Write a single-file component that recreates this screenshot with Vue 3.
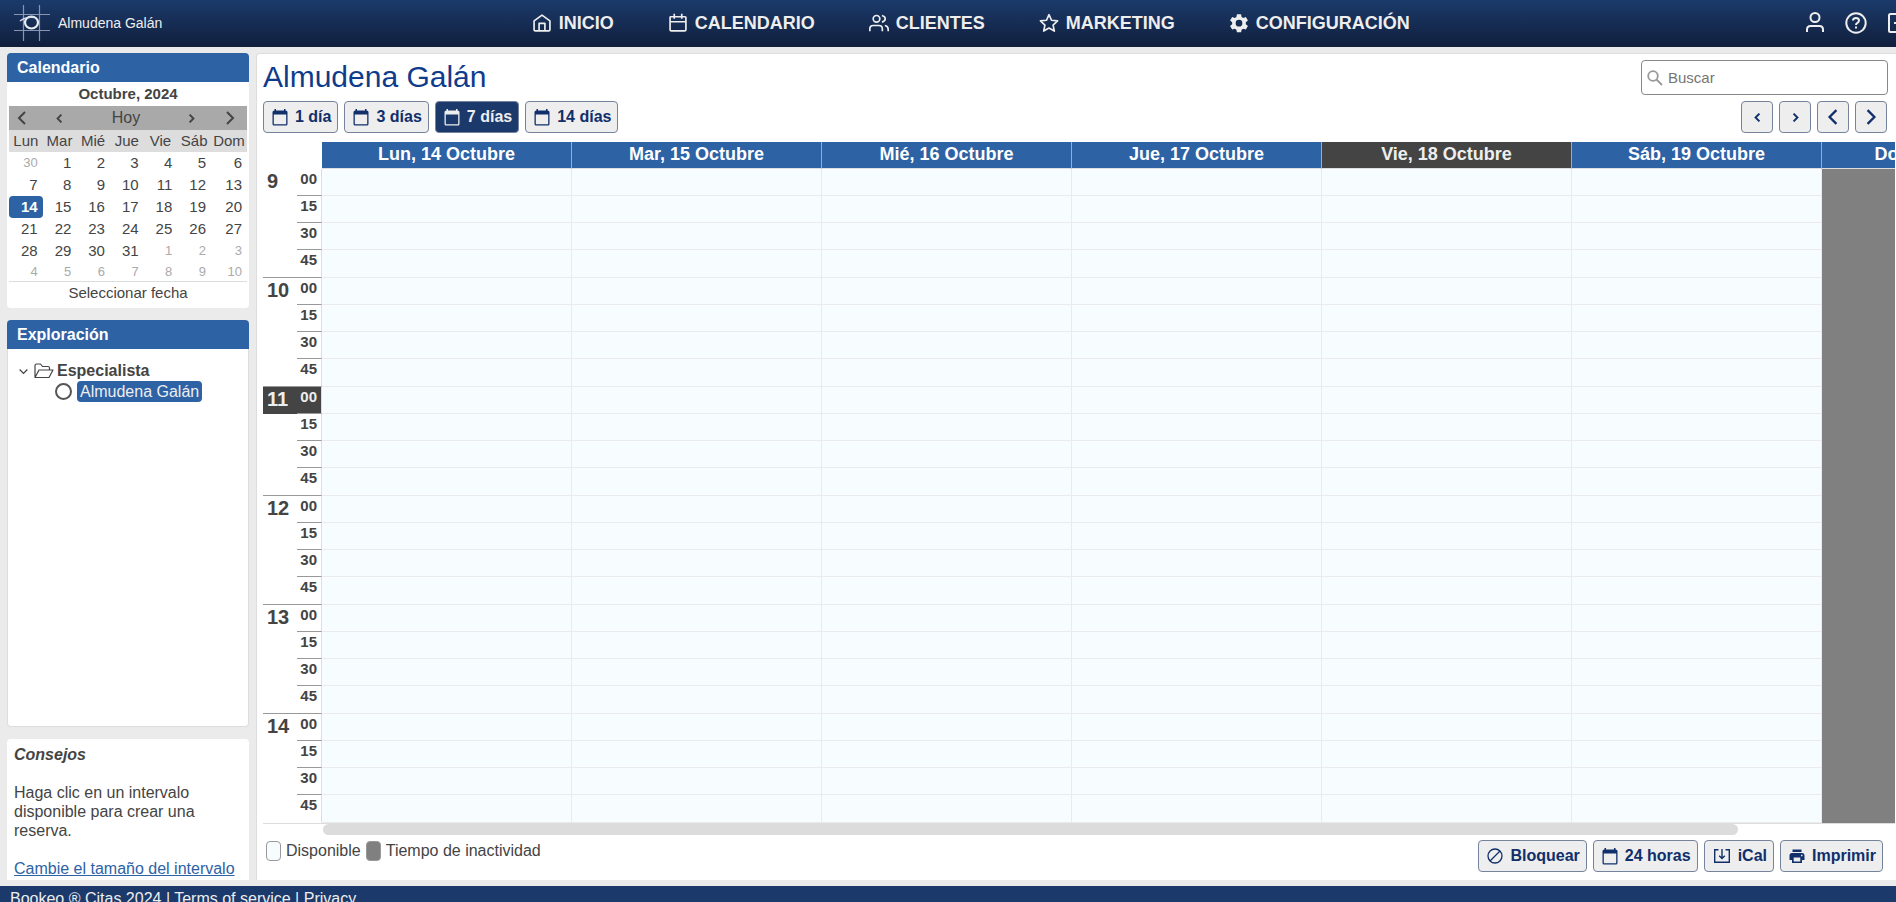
<template>
    <div class="page">
        <header>
            <a href="#" class="brand">
                <svg class="logo" viewBox="0 0 36 36" fill="none">
                    <path d="M9.500 0v36M25.500 0v36M0 9.500h36M0 25.500h36" stroke="#8795af" stroke-width="1.200" />
                    <ellipse cx="17.500" cy="17.500" rx="6.500" ry="6" stroke="#e8edf4" stroke-width="2.200" />
                    <path d="M6 16c4-3 9-4 14-3.500" stroke="#d5dce8" stroke-width="1.500" />
                </svg>
                <span>Almudena Galán</span>
            </a>
            <nav>
                <a v-for="link in links" :key="link.name" href="#">
                    <svg class="icon-menu" viewBox="0 0 24 24" fill="none" stroke="currentColor" stroke-width="2" stroke-linejoin="round">
                        <path v-for="d in link.paths" :key="d" :d="d" :fill="link.solid ? 'currentColor' : 'none'" :stroke="link.solid ? 'none' : 'currentColor'" fill-rule="evenodd" />
                    </svg>
                    <span>{{ link.name }}</span>
                </a>
            </nav>
            <div class="tools">
                <button v-for="tool in tools" :key="tool.name" :aria-label="tool.name">
                    <svg viewBox="0 0 24 24" fill="none" stroke="currentColor" stroke-width="2">
                        <path v-for="d in tool.paths" :key="d" :d="d" />
                    </svg>
                </button>
            </div>
        </header>

        <div class="body">
            <aside>
                <section class="box">
                    <h2>Calendario</h2>
                    <div class="month">Octubre, 2024</div>
                    <div class="picker">
                        <div class="month-nav">
                            <button aria-label="Mes anterior"><svg class="chevron-big" viewBox="0 0 14 14"><path d="M10 1L4 7l6 6" /></svg></button>
                            <button aria-label="Semana anterior"><svg class="chevron-small" viewBox="0 0 14 14"><path d="M10 1L4 7l6 6" /></svg></button>
                            <button>Hoy</button>
                            <button aria-label="Semana siguiente"><svg class="chevron-small" viewBox="0 0 14 14"><path d="M4 1l6 6-6 6" /></svg></button>
                            <button aria-label="Mes siguiente"><svg class="chevron-big" viewBox="0 0 14 14"><path d="M4 1l6 6-6 6" /></svg></button>
                        </div>
                        <table>
                            <thead>
                                <tr>
                                    <th v-for="day in weekdays" :key="day">{{ day }}</th>
                                </tr>
                            </thead>
                            <tbody>
                                <tr v-for="(week, w) in weeks" :key="w">
                                    <td v-for="day in week" :key="day.key" :class="{ dim: day.dim, selected: day.selected }">{{ day.number }}</td>
                                </tr>
                            </tbody>
                        </table>
                        <button class="select-date">Seleccionar fecha</button>
                    </div>
                </section>

                <section class="box explore">
                    <h2>Exploración</h2>
                    <div class="tree">
                        <div class="branch">
                            <svg class="chevron-tree" viewBox="0 0 14 14"><path d="M1 4l6 6 6-6" /></svg>
                            <svg class="folder" viewBox="0 0 20 16" fill="none" stroke="currentColor" stroke-width="1.200" stroke-linejoin="round">
                                <path d="M1 14V2.500Q1 1 2.500 1h4l2 2.500H14Q15.500 3.500 15.500 5v2M1 14.500L5 7h14l-4 7.500z" />
                            </svg>
                            <b>Especialista</b>
                        </div>
                        <label class="leaf">
                            <input type="radio" name="specialist">
                            <span>Almudena Galán</span>
                        </label>
                    </div>
                </section>

                <section class="box tips">
                    <h3>Consejos</h3>
                    <p>Haga clic en un intervalo disponible para crear una reserva.</p>
                    <a href="#">Cambie el tamaño del intervalo</a>
                </section>
            </aside>

            <main>
                <div class="title-row">
                    <h1>Almudena Galán</h1>
                    <label class="search">
                        <svg viewBox="0 0 16 16" fill="none" stroke="#999" stroke-width="1.800"><circle cx="6" cy="6" r="4.800" /><path d="M9.500 9.500l5.500 5.500" /></svg>
                        <input type="search" placeholder="Buscar" aria-label="Buscar" v-model="search">
                    </label>
                </div>
                <div class="toolbar">
                    <button v-for="view in views" :key="view" class="btn" :class="{ active: view === selectedView }" @click="selectedView = view">
                        <svg class="icon" viewBox="0 0 16 17"><path :d="calendarIcon" fill="currentColor" fill-rule="evenodd" /></svg>
                        {{ view }}
                    </button>
                    <div class="pager">
                        <button class="btn square" aria-label="Día anterior"><svg class="chevron-small" viewBox="0 0 14 14"><path d="M10 1L4 7l6 6" /></svg></button>
                        <button class="btn square" aria-label="Día siguiente"><svg class="chevron-small" viewBox="0 0 14 14"><path d="M4 1l6 6-6 6" /></svg></button>
                        <button class="btn square" aria-label="Período anterior"><svg class="chevron-page" viewBox="0 0 14 14"><path d="M10 1L4 7l6 6" /></svg></button>
                        <button class="btn square" aria-label="Período siguiente"><svg class="chevron-page" viewBox="0 0 14 14"><path d="M4 1l6 6-6 6" /></svg></button>
                    </div>
                </div>

                <div class="schedule">
                    <table>
                        <thead>
                            <tr>
                                <td class="hour"></td>
                                <td class="minute"></td>
                                <th v-for="day in days" :key="day.name" class="day" :class="{ today: day.today }">{{ day.name }}</th>
                            </tr>
                        </thead>
                        <tbody>
                            <tr v-for="slot in slots" :key="slot.key" :class="{ last: slot.minute === '45', now: slot.now }">
                                <th class="hour">{{ slot.minute === '00' ? slot.hour : '' }}</th>
                                <th class="minute">{{ slot.minute }}</th>
                                <td v-for="day in days" :key="day.name" :class="{ closed: day.closed }"></td>
                            </tr>
                        </tbody>
                    </table>
                </div>
                <div class="scrollbar"><div></div></div>

                <div class="bottom">
                    <div class="legend">
                        <i class="available"></i><span>Disponible</span>
                        <i class="inactive"></i><span>Tiempo de inactividad</span>
                    </div>
                    <div class="actions">
                        <button class="btn">
                            <svg class="icon" viewBox="0 0 16 17" fill="none" stroke="currentColor" stroke-width="1.300"><circle cx="8" cy="8" r="7" /><path d="M3 13L13 3" /></svg>
                            Bloquear
                        </button>
                        <button class="btn">
                            <svg class="icon" viewBox="0 0 16 17"><path :d="calendarIcon" fill="currentColor" fill-rule="evenodd" /></svg>
                            24 horas
                        </button>
                        <button class="btn">
                            <svg class="icon wide" viewBox="0 0 18 17" fill="none" stroke="currentColor" stroke-width="1.400"><path d="M5.500 1.700H1.700v12.600h14.600V1.700h-3.800M9 1v9M6.200 7.700L9 10.500l2.800-2.800" /></svg>
                            iCal
                        </button>
                        <button class="btn">
                            <svg class="icon" viewBox="0 0 16 17" fill="currentColor" fill-rule="evenodd"><path d="M3.500 1.500h9V4h-9zM3 5h10q2.500 0 2.500 2.500V12H13v3H3v-3H.5V7.500Q.5 5 3 5zM4.700 9.500v4h6.600v-4zM12 6.800v1.500h1.500V6.800z" /></svg>
                            Imprimir
                        </button>
                    </div>
                </div>
            </main>
        </div>

        <footer>
            <span>Bookeo ® Citas 2024 | <a href="#">Terms of service</a> | <a href="#">Privacy</a></span>
        </footer>
    </div>
</template>

<script setup>
import { ref } from 'vue'

const search = ref('')
const views = ['1 día', '3 días', '7 días', '14 días']
const selectedView = ref('7 días')

const calendarIcon = 'M2.500 0H4v1.500h8V0h1.500v1.500Q15.500 1.500 15.500 3v12q0 1.500-1.500 1.500H2Q.5 16.500 .5 15V3Q.5 1.500 2.500 1.500zM1.800 5.500v9.700h12.400V5.500z'

const links = [
    { name: 'INICIO', paths: ['M2.500 9.500L12 2.500l9.500 7V20q0 1.500-1.500 1.500H4q-1.500 0-1.500-1.500z', 'M8.500 21.500v-9h7v9'] },
    { name: 'CALENDARIO', paths: ['M2.500 5Q2.500 4.500 3.500 4.500h17q1 0 1 1V20q0 1.500-1.500 1.500H4q-1.500 0-1.500-1.500z', 'M2.500 10.500h19M7.500 1v6M16.500 1v6'] },
    { name: 'CLIENTES', paths: ['M13 7a4 4 0 1 1-8 0a4 4 0 1 1 8 0', 'M1 22v-3q0-4 4-4h7q4 0 4 4v3', 'M15.500 3q4 1 4 4t-4 4', 'M19 15q4 .5 4 4.500V22'] },
    { name: 'MARKETING', paths: ['M12 2l3 6.700 7.300.8-5.400 5 1.500 7.200L12 18l-6.400 3.700 1.500-7.200-5.400-5L9 8.700z'] },
    { name: 'CONFIGURACIÓN', solid: true, paths: ['M9.500 1.500h5l.6 3.200 2 1.200 3.100-1.100 2.500 4.300-2.500 2.100v2.300l2.500 2.100-2.500 4.300-3.100-1.100-2 1.200-.6 3.200h-5l-.6-3.200-2-1.200-3.100 1.100-2.500-4.300 2.500-2.100v-2.300L1.300 9.100l2.500-4.300 3.100 1.100 2-1.200zM12 8.200a4 4 0 1 0 0 8a4 4 0 1 0 0-8z'] }
]

const tools = [
    { name: 'Cuenta', paths: ['M16.500 6.500a4.500 4.500 0 1 1-9 0a4.500 4.500 0 1 1 9 0', 'M4 21v-2.500Q4 15 7.500 15h9q3.500 0 3.500 3.500V21'] },
    { name: 'Ayuda', paths: ['M21.700 12a9.700 9.700 0 1 1-19.400 0a9.700 9.700 0 1 1 19.400 0', 'M9 9.500Q9 7 12 7t3 2.500q0 1.500-1.500 2.300T12 14', 'M12 15.500v2'] },
    { name: 'Salir', paths: ['M15 8V3H5.500Q4 3 4 4.500v15Q4 21 5.500 21H15v-5', 'M9 12h13'] }
]

const weekdays = ['Lun', 'Mar', 'Mié', 'Jue', 'Vie', 'Sáb', 'Dom']

// six weeks, starting on Monday 30 September
const weeks = Array.from({ length: 6 }, (_, w) =>
    Array.from({ length: 7 }, (_, d) => {
        const date = new Date(2024, 8, 30 + w * 7 + d)
        const inMonth = date.getMonth() === 9
        return {
            key: w * 7 + d,
            number: date.getDate(),
            dim: !inMonth,
            selected: inMonth && date.getDate() === 14
        }
    })
)

const days = [
    { name: 'Lun, 14 Octubre' },
    { name: 'Mar, 15 Octubre' },
    { name: 'Mié, 16 Octubre' },
    { name: 'Jue, 17 Octubre' },
    { name: 'Vie, 18 Octubre', today: true },
    { name: 'Sáb, 19 Octubre' },
    { name: 'Dom, 20 Octubre', closed: true }
]

const slots = [9, 10, 11, 12, 13, 14].flatMap(hour =>
    ['00', '15', '30', '45'].map(minute => ({
        key: hour + ':' + minute,
        hour,
        minute,
        now: hour === 11 && minute === '00'
    }))
)
</script>

<style>
body {
    background-color: #ebebeb;
    overflow: hidden;
}
</style>

<style scoped>
* {
    box-sizing: border-box;
}

.page {
    display: flex;
    flex-direction: column;
    height: 100vh;
    overflow: hidden;
    font: 16px "Liberation Sans", Arial, sans-serif;
    color: #444;
}

button {
    font: inherit;
    color: inherit;
    background: none;
    border: none;
    padding: 0;
    cursor: pointer;
}

a {
    color: inherit;
    text-decoration: none;
}

h1, h2, h3, p {
    margin: 0;
}

table {
    border-spacing: 0;
    table-layout: fixed;
}

th, td {
    padding: 0;
}

svg {
    display: block;
    flex: none;
}

header {
    display: flex;
    align-items: center;
    height: 47px;
    flex: none;
    padding: 0 0 2px 14px;
    background: linear-gradient(#1b3a6b, #111f3c);
    color: #eee;
    overflow: hidden;
}

.brand {
    display: flex;
    align-items: center;
    gap: 8px;
    font-size: 14px;
}

.logo {
    width: 36px;
    height: 36px;
}

nav {
    display: flex;
    gap: 54px;
    margin: 0 auto;
    padding-top: 1px;
    font-size: 18px;
    font-weight: bold;
}

nav a {
    display: flex;
    align-items: center;
    gap: 7px;
}

.icon-menu {
    width: 20px;
    height: 20px;
}

.tools {
    display: flex;
    gap: 17px;
    width: 117px;
    padding-left: 24px;
}

.tools svg {
    width: 24px;
    height: 24px;
}

.body {
    display: flex;
    flex: 1;
    min-height: 0;
    padding: 6px 0 6px 7px;
    gap: 7px;
}

aside {
    display: flex;
    flex-direction: column;
    gap: 12px;
    width: 242px;
    flex: none;
}

.box {
    background-color: white;
    border-radius: 4px;
}

h2 {
    height: 29px;
    line-height: 29px;
    padding-left: 10px;
    font-size: 16px;
    color: white;
    background-color: #2d62a5;
    border-radius: 4px 4px 0 0;
}

.month {
    text-align: center;
    font-weight: bold;
    font-size: 15px;
    line-height: 24px;
}

.picker {
    padding: 0 2px 6px;
    font-size: 15px;
}

.picker table {
    width: 100%;
    text-align: right;
    line-height: 22px;
    border-bottom: 1px solid #ddd;
}

.picker th {
    height: 22px;
    font-weight: normal;
    text-align: center;
    background-color: #ddd;
}

.picker th:last-child {
    width: 36px;
}

.picker td {
    height: 22px;
    padding-right: 5px;
}

.picker tr:last-child td {
    height: 19px;
    line-height: 19px;
}

.picker .dim {
    color: #aaa;
    font-size: 13px;
}

.picker .selected {
    background-color: #2d62a5;
    color: white;
    font-weight: bold;
    border-radius: 4px;
}

.month-nav {
    display: grid;
    grid-template-columns: 26px 48px 1fr 44px 34px;
    align-items: center;
    justify-items: center;
    height: 24px;
    font-size: 16px;
    background-color: #a9a9a9;
}

.select-date {
    width: 100%;
    height: 20px;
    font-size: 15px;
}

.chevron-big, .chevron-small, .chevron-page, .chevron-tree {
    width: 14px;
    height: 14px;
    fill: none;
    stroke: currentColor;
    stroke-width: 2;
}

.chevron-small {
    width: 9px;
    height: 9px;
    stroke-width: 3;
}

.chevron-page {
    width: 16px;
    height: 16px;
}

.chevron-tree {
    width: 9px;
    height: 9px;
}

.explore {
    flex: 1;
    border: 1px solid #ddd;
    border-top: none;
}

.explore h2 {
    margin: 0 -1px;
}

.tree {
    padding: 12px 0 0 11px;
}

.branch, .leaf {
    display: flex;
    align-items: center;
    height: 20px;
}

.folder {
    width: 20px;
    height: 16px;
    margin: 0 3px 0 6px;
}

.leaf {
    padding-left: 36px;
}

.leaf input {
    appearance: none;
    width: 17px;
    height: 17px;
    margin: 0 5px 0 0;
    border: 2px solid #555;
    border-radius: 50%;
}

.leaf span {
    padding: 0 3px;
    line-height: 21px;
    color: #eee;
    background-color: #2d62a5;
    border-radius: 4px;
}

.tips {
    padding: 6px 7px 2px;
    line-height: 19px;
    border-radius: 4px 4px 0 0;
}

.tips h3 {
    font-size: 16px;
    font-style: italic;
}

.tips p {
    margin: 19px 0;
}

.tips a {
    color: #2d62a5;
    text-decoration: underline;
    white-space: nowrap;
}

main {
    display: flex;
    flex-direction: column;
    flex: 1;
    min-width: 0;
    padding: 6px 1px 8px 6px;
    background-color: white;
    border: 1px solid #ddd;
    border-width: 1px 0 0 1px;
    border-radius: 4px 0 0 0;
}

.title-row {
    display: flex;
    justify-content: space-between;
    height: 41px;
    padding-right: 7px;
}

h1 {
    font-size: 30px;
    line-height: 34px;
    font-weight: normal;
    color: #0f3b8c;
}

.search {
    display: flex;
    align-items: center;
    gap: 5px;
    width: 247px;
    height: 35px;
    padding: 0 5px;
    border: 1px solid #888;
    border-radius: 4px;
}

.search svg {
    width: 16px;
    height: 16px;
}

.search input {
    flex: 1;
    min-width: 0;
    border: none;
    outline: none;
    padding: 0;
    font: 15px "Liberation Sans", Arial, sans-serif;
}

.search input::placeholder {
    color: #757575;
}

.toolbar {
    display: flex;
    gap: 6px;
    padding-right: 8px;
    margin-bottom: 9px;
}

.btn {
    display: flex;
    align-items: center;
    gap: 7px;
    height: 32px;
    padding: 0 6px 0 8px;
    font-weight: bold;
    color: #102f6b;
    background-color: #eee;
    border: 1px solid #76839c;
    border-radius: 4px;
}

.btn.active {
    color: #eee;
    background-color: #1b396b;
}

.btn.square {
    justify-content: center;
    width: 32px;
    padding: 0;
}

.icon {
    width: 16px;
    height: 17px;
}

.icon.wide {
    width: 18px;
}

.pager {
    display: flex;
    gap: 6px;
    margin-left: auto;
}

.schedule {
    flex: 1;
    min-height: 0;
    overflow: hidden;
    border-bottom: 1px solid #ddd;
}

.schedule table {
    width: 1809px;
}

.schedule th, .schedule td {
    height: 27px;
    vertical-align: top;
}

.schedule .last th, .schedule .last td {
    height: 28px;
}

.schedule .hour {
    width: 34px;
}

.schedule .minute {
    width: 25px;
}

.day {
    font-size: 18px;
    line-height: 24px;
    color: white;
    background-color: #2d62a5;
    border-right: 1px solid #aaa;
    border-bottom: 1px solid #ddd;
}

.day.today {
    color: #eee;
    background-color: #444;
}

tbody .hour {
    padding-left: 4px;
    text-align: left;
    font-size: 20px;
    line-height: 24px;
}

tbody .minute {
    padding-right: 4px;
    text-align: right;
    font-size: 15px;
    line-height: 20px;
    border-bottom: 1px solid #999;
    border-right: 1px solid #ddd;
}

.last .hour {
    border-bottom: 1px solid #999;
}

tr.last:last-child th {
    border-bottom-color: transparent;
}

.now th {
    color: #eee;
    background-color: #444;
}

.schedule tbody td {
    background-color: #f7fcff;
    border: 1px solid #ebebeb;
    border-width: 0 1px 1px 0;
}

.schedule tbody td.closed {
    background-color: #808080;
    border-color: #808080;
}

.scrollbar {
    height: 11px;
    flex: none;
    padding-left: 60px;
}

.scrollbar div {
    width: 90%;
    height: 11px;
    background-color: #dcdcdc;
    border-radius: 6px;
}

.bottom {
    display: flex;
    justify-content: space-between;
    padding: 5px 12px 0 3px;
}

.legend {
    display: flex;
    align-items: center;
    gap: 5px;
    height: 22px;
}

.legend i {
    width: 15px;
    height: 20px;
    border: 1px solid #999;
    border-radius: 4px;
}

.available {
    background-color: #f7fcff;
}

.inactive {
    background-color: #808080;
}

.actions {
    display: flex;
    gap: 6px;
}

footer {
    height: 16px;
    flex: none;
    overflow: hidden;
    padding: 3px 10px 0;
    line-height: 20px;
    color: #eee;
    background-color: #1b396b;
}
</style>
